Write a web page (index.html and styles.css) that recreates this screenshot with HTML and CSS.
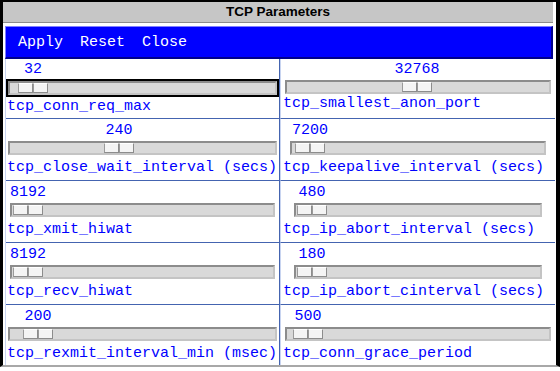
FILE: index.html
```html
<!DOCTYPE html>
<html>
<head>
  <meta charset="utf-8">
  <title>TCP Parameters</title>
  <link rel="stylesheet" href="styles.css">
</head>
<body>
  <div class="frame">
    <div class="titlebar">TCP Parameters</div>

    <div class="menubar">
      <span class="menu-item">Apply</span>
      <span class="menu-item">Reset</span>
      <span class="menu-item">Close</span>
    </div>

    <div class="grid">
      <!-- row 1 -->
      <div class="cell left first">
        <div class="scale" style="--pos: 12px">
          <div class="value"><span>32</span></div>
          <div class="focus"><div class="trough"><div class="thumb"><i></i><i></i></div></div></div>
        </div>
        <div class="label">tcp_conn_req_max</div>
      </div>
      <div class="cell right first">
        <div class="scale inset-4" style="--pos: 117px">
          <div class="value"><span>32768</span></div>
          <div class="trough"><div class="thumb"><i></i><i></i></div></div>
        </div>
        <div class="label">tcp_smallest_anon_port</div>
      </div>

      <!-- row 2 -->
      <div class="cell left">
        <div class="scale inset-2" style="--pos: 96px">
          <div class="value"><span>240</span></div>
          <div class="trough"><div class="thumb"><i></i><i></i></div></div>
        </div>
        <div class="label">tcp_close_wait_interval (secs)</div>
      </div>
      <div class="cell right">
        <div class="scale inset-9" style="--pos: 5px">
          <div class="value"><span>7200</span></div>
          <div class="trough"><div class="thumb"><i></i><i></i></div></div>
        </div>
        <div class="label">tcp_keepalive_interval (secs)</div>
      </div>

      <!-- row 3 -->
      <div class="cell left">
        <div class="scale inset-4" style="--pos: 3px">
          <div class="value"><span>8192</span></div>
          <div class="trough"><div class="thumb"><i></i><i></i></div></div>
        </div>
        <div class="label">tcp_xmit_hiwat</div>
      </div>
      <div class="cell right">
        <div class="scale inset-13" style="--pos: 3px">
          <div class="value"><span>480</span></div>
          <div class="trough"><div class="thumb"><i></i><i></i></div></div>
        </div>
        <div class="label">tcp_ip_abort_interval (secs)</div>
      </div>

      <!-- row 4 -->
      <div class="cell left">
        <div class="scale inset-4" style="--pos: 3px">
          <div class="value"><span>8192</span></div>
          <div class="trough"><div class="thumb"><i></i><i></i></div></div>
        </div>
        <div class="label">tcp_recv_hiwat</div>
      </div>
      <div class="cell right">
        <div class="scale inset-13" style="--pos: 3px">
          <div class="value"><span>180</span></div>
          <div class="trough"><div class="thumb"><i></i><i></i></div></div>
        </div>
        <div class="label">tcp_ip_abort_cinterval (secs)</div>
      </div>

      <!-- row 5 -->
      <div class="cell left last">
        <div class="scale inset-2" style="--pos: 15px">
          <div class="value"><span>200</span></div>
          <div class="trough"><div class="thumb"><i></i><i></i></div></div>
        </div>
        <div class="label">tcp_rexmit_interval_min (msec)</div>
      </div>
      <div class="cell right last">
        <div class="scale inset-4" style="--pos: 8px">
          <div class="value"><span>500</span></div>
          <div class="trough"><div class="thumb"><i></i><i></i></div></div>
        </div>
        <div class="label">tcp_conn_grace_period</div>
      </div>
    </div>
  </div>
</body>
</html>
```

FILE: styles.css
```css
body {
  margin: 0;
  padding: 0;
  background-color: #fff;
  font-family: "Liberation Mono", "DejaVu Sans Mono", monospace;
}

/* window frame */
.frame {
  position: relative;
  box-sizing: border-box;
  width: 560px;
  height: 367px;
  border-top: 2px solid #000;
  border-left: 3px solid #000;
  border-right: 4px solid #000;
  border-bottom: 2px solid #a8a8a8;
  background-color: #fff;
  overflow: hidden;
}

.titlebar {
  height: 20px;
  line-height: 20px;
  margin-right: 3px;
  background-color: #c6c6c6;
  border-bottom: 1px solid #8c8c8c;
  text-align: center;
  font-family: "Liberation Sans", Arial, sans-serif;
  font-weight: bold;
  font-size: 13.5px;
  color: #000;
}

.menubar {
  display: flex;
  gap: 17px;
  box-sizing: border-box;
  height: 33px;
  margin: 3px 3px 0 2px;
  padding-left: 12px;
  align-items: center;
  background-color: #0000ff;
  border-top: 1px solid #7f7fff;
  border-left: 1px solid #7f7fff;
  border-bottom: 2px solid #00008c;
  border-right: 2px solid #00008c;
}

.menu-item {
  color: #fff;
  font-size: 15px;
  line-height: 17px;
}

/* parameter grid */
.grid {
  display: grid;
  grid-template-columns: 274px 275px;
  margin-left: 2px;
  border-left: 1px solid #c8d4f0;
}

.cell {
  box-sizing: border-box;
  height: 62px;
  padding-top: 3px;
  border-bottom: 1px solid #4464b0;
  background-color: #fff;
}

.cell.first {
  height: 60px;
  padding-top: 2px;
}

.cell.left {
  border-right: 1px solid #4464b0;
}

.cell.right {
  border-left: 1px solid #c8d4f0;
}

.scale {
  margin: 0;
}

.inset-2 { margin: 0 2px; }
.inset-4 { margin: 0 4px; }
.inset-9 { margin: 0 9px; }
.inset-13 { margin: 0 13px; }

.value {
  display: flex;
  justify-content: center;
  width: 30px;
  margin-left: var(--pos);
  height: 17px;
  line-height: 17px;
  font-size: 15px;
  color: #0000ff;
  white-space: nowrap;
}

.trough {
  box-sizing: border-box;
  height: 14px;
  margin-top: 2px;
  background-color: #d9d9d9;
  border: 2px solid;
  border-color: #8c8c8c #c4c4c4 #c4c4c4 #8c8c8c;
}

.focus {
  margin-top: 1px;
  border: 2px solid #000;
}

.focus .trough {
  margin-top: 0;
}

.thumb {
  display: flex;
  width: 30px;
  height: 10px;
  margin-left: calc(var(--pos) - 2px);
}

.focus .thumb {
  margin-left: calc(var(--pos) - 4px);
}

.thumb i {
  box-sizing: border-box;
  flex: 1;
  background-color: #f4f4f4;
  border: 1px solid;
  border-color: #fff #8c8c8c #8c8c8c #9a9a9a;
}

.label {
  margin-top: 4px;
  font-size: 15px;
  line-height: 17px;
  color: #0000ff;
  white-space: nowrap;
}

.left .label {
  padding-left: 1px;
}

.right .label {
  padding-left: 2px;
}

.first .label {
  margin-top: 1px;
}
```
